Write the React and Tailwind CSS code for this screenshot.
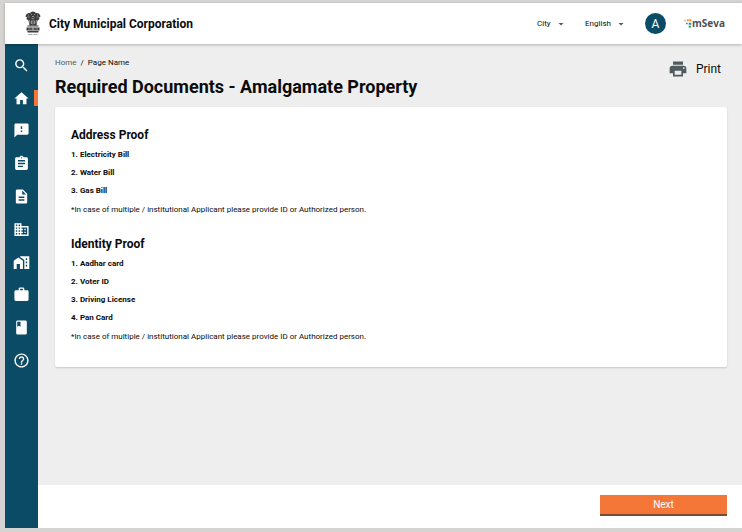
import {
  MdSearch, MdHome, MdFeedback, MdAssignment, MdDescription, MdBusiness,
  MdWork, MdHelpOutline, MdPrint, MdArrowDropDown,
} from "react-icons/md";

function BookIcon({ className }) {
  return (
    <svg viewBox="0 0 24 24" className={className} fill="currentColor" aria-hidden="true">
      <path fillRule="evenodd" d="M6.500 2h11a2 2 0 0 1 2 2v16a2 2 0 0 1-2 2h-11a2 2 0 0 1-2-2V4a2 2 0 0 1 2-2zM6 4v7l2.300-1.600L10.600 11V4z" />
    </svg>
  );
}

function PropertyIcon({ className }) {
  return (
    <svg viewBox="0 0 24 24" className={className} fill="currentColor" aria-hidden="true">
      <path d="M1 21V9.500L7.500 5 14 9.500V21H9.800v-7H5.200v7z" />
      <path fillRule="evenodd" d="M10 3h13v18h-7V8.500L10 4.300zM18 6v2.500h2V6zM18 10.500V13h2v-2.500zM18 15v2.500h2V15z" />
    </svg>
  );
}

const navItems = [
  { label: "Search", Icon: MdSearch },
  { label: "Home", Icon: MdHome, active: true },
  { label: "Complaints", Icon: MdFeedback },
  { label: "Assignments", Icon: MdAssignment },
  { label: "Documents", Icon: MdDescription },
  { label: "Business", Icon: MdBusiness },
  { label: "Property", Icon: PropertyIcon },
  { label: "Work", Icon: MdWork },
  { label: "Records", Icon: BookIcon },
  { label: "Help", Icon: MdHelpOutline },
];

const note = "*In case of multiple / institutional Applicant please provide ID or Authorized person.";

const sections = [
  { title: "Address Proof", items: ["Electricity Bill", "Water Bill", "Gas Bill"] },
  { title: "Identity Proof", items: ["Aadhar card", "Voter ID", "Driving License", "Pan Card"] },
];

function Emblem() {
  return (
    <svg viewBox="0 0 32 50" className="h-[25px] w-4" aria-label="State emblem" role="img">
      <g fill="#3c3c3c">
        <path d="M11 3q5-4 10 0l2 6-2 7 1 13H10l1-13-2-7z" />
        <path d="M10 4q-6-1-8 4l-1 3 3 2-1 3 4 3 2 10h3V12z" />
        <path d="M22 4q6-1 8 4l1 3-3 2 1 3-4 3-2 10h-3V12z" />
        <path d="M5 29h22v2H5zM3 33h26v6H3zM5 40h22v3H5z" />
      </g>
      <g fill="none" stroke="#eee" strokeWidth="1">
        <path d="M12 7h2m4 0h2M14 11h4M13 14l3 2 3-2M16 18v9M13 19v7M19 19v7M6 8h2M24 8h2M5 12h4M23 12h4M9 18l1 7M23 18l-1 7" />
        <circle cx="16" cy="36" r="2" />
        <path d="M6 36h5M21 36h5" />
      </g>
      <path d="M7 47h3m1 0h4m2 0h3m1 0h4" stroke="#999" strokeWidth="2" fill="none" />
    </svg>
  );
}

function Picker({ label, value }) {
  return (
    <div className="relative flex items-center">
      <select aria-label={label} defaultValue={value} className="appearance-none bg-transparent pr-4 text-[8px] leading-4 text-[#0b0c0c]">
        <option>{value}</option>
      </select>
      <MdArrowDropDown className="pointer-events-none absolute right-0 size-3 text-[#505a5f]" />
    </div>
  );
}

export default function App() {
  return (
    <div className="flex min-h-screen flex-col bg-[#d6d4d2] pt-[3px] pb-1 pl-[5px] font-['Roboto',sans-serif] text-[#0b0c0c]">
      <header className="z-10 flex h-[41px] items-center bg-white pr-[17px] pl-5 shadow-[0_1px_3px_rgba(0,0,0,0.25)]">
        <Emblem />
        <span className="ml-2 text-[12px] font-bold">City Municipal Corporation</span>
        <div className="ml-auto flex items-center gap-[18px]">
          <Picker label="City" value="City" />
          <Picker label="Language" value="English" />
          <button type="button" className="flex size-[21px] items-center justify-center rounded-full bg-[#0b4b66] text-[12px] text-white">A</button>
          <div className="flex items-center">
            <svg viewBox="0 0 24 27" className="h-[9px] w-2" aria-hidden="true">
              <path fill="#f9b27c" d="M0 2h6v5H0z" />
              <path fill="#f5821f" d="M9 1h5v6H9zM16 1h6v6h-6z" />
              <path fill="#2f86c8" d="M6 11h5v5H6zM14 11h8v6h-8z" />
              <path fill="#34a853" d="M14 20h7v6h-7z" />
            </svg>
            <span className="font-['Open_Sans',sans-serif] text-[10px] font-bold text-[#505052]">mSeva</span>
          </div>
        </div>
      </header>
      <div className="flex flex-1">
        <nav className="w-[33px] shrink-0 bg-[#0b4b66] pt-[5px]">
          <ul className="flex h-[328px] flex-col">
            {navItems.map(({ label, Icon, active }) => (
              <li key={label} className="relative flex flex-1 items-center justify-center">
                <a href="#" aria-label={label} className="text-white"><Icon className="size-[17px]" /></a>
                {active && <span className="absolute right-0 h-4 w-1 bg-[#f47738]" />}
              </li>
            ))}
          </ul>
        </nav>
        <div className="flex flex-1 flex-col bg-[#eeeeee]">
          <main className="flex-1 pr-[15px] pl-[17px]">
            <div className="flex items-start justify-between pt-3">
              <div>
                <ol className="flex gap-1 text-[8px] leading-[14px]">
                  <li><a href="#" className="text-[#505a5f]">Home</a></li>
                  <li>/</li>
                  <li>Page Name</li>
                </ol>
                <h1 className="mt-[5px] text-[18px] leading-6 font-bold">Required Documents - Amalgamate Property</h1>
              </div>
              <button type="button" className="mt-[3px] mr-[6px] flex items-center gap-2 text-[12px] leading-5">
                <MdPrint className="size-5 text-[#505a5f]" />
                Print
              </button>
            </div>
            <div className="mt-2 rounded-xs bg-white px-4 pt-5 pb-5 shadow-[0_1px_2px_rgba(0,0,0,0.16)]">
              {sections.map((s) => (
                <section key={s.title} className="not-first:mt-4">
                  <h2 className="text-[12px] leading-4 font-bold">{s.title}</h2>
                  <ol className="mt-[3px]">
                    {s.items.map((t, i) => (
                      <li key={t} className="text-[8px] leading-[18px] font-bold">{i + 1}. {t}</li>
                    ))}
                  </ol>
                  <p className="text-[8px] leading-5">{note}</p>
                </section>
              ))}
            </div>
          </main>
          <footer className="flex h-[43px] items-start justify-end bg-white pt-[10px] pr-[15px]">
            <button type="button" className="h-[21px] w-[127px] border-b-2 border-[#7b4a35] bg-[#f47738] text-[10px] text-white">Next</button>
          </footer>
        </div>
      </div>
    </div>
  );
}
